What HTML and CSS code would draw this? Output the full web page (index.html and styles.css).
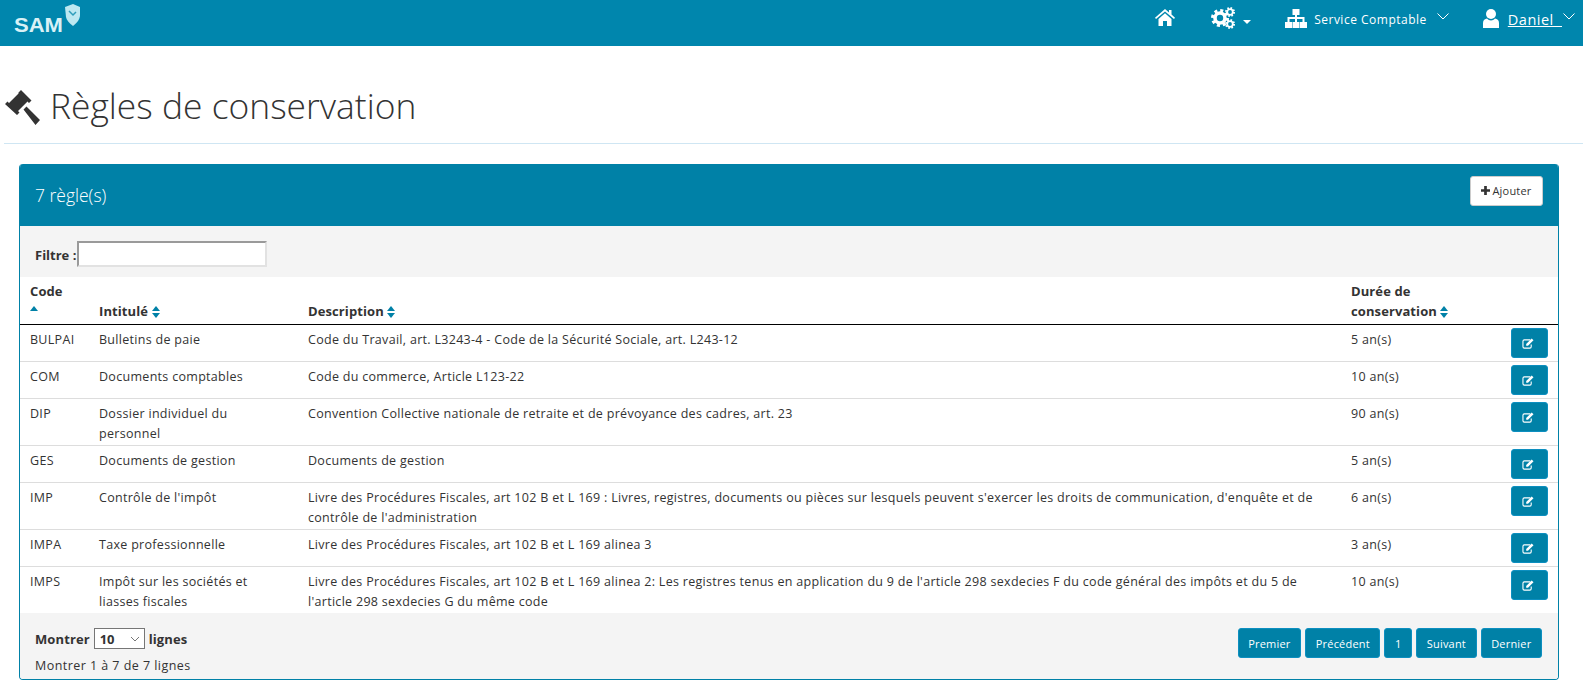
FILE: index.html
```html
<!DOCTYPE html>
<html lang="fr">
<head>
<meta charset="utf-8">
<title>Règles de conservation</title>
<link rel="stylesheet" href="styles.css">
</head>
<body>
<svg class="defs"><symbol id="edit" viewBox="0 0 13 12"><path d="M9 2H2.500A1.500 1.500 0 0 0 1 3.500V9.500A1.500 1.500 0 0 0 2.500 11H8.500A1.500 1.500 0 0 0 10 9.500V7" fill="none" stroke="#fff" stroke-width="1.200"/><path d="M4.500 6.500 10.500 .5 12.500 2.500 6.500 8.500H4.500Z" fill="#fff"/></symbol></svg>
<nav class="navbar">
  <a class="brand">
    <span class="brand-text">SAM</span>
    <svg class="brand-shield" viewBox="0 0 15 22"><path d="M0 3 8 0 15 3V11C15 15 12 19 8 22 4 19 1.500 16 1 13Z" fill="#bde8f1"/><path d="M4 7 8 11 11 8" fill="none" stroke="#2f9dbb" stroke-width="1.500"/></svg>
  </a>
  <ul class="nav-items">
    <li class="nav-home"><svg class="ico-home" viewBox="0 0 20 17"><path d="M10 0 14 3.500V1H16.500V5.600L20 8.800 19 10 10 2.400 1 10 0 8.800Z M3.500 10 10 4.300 16.500 10V17H12V12H8V17H3.500Z" fill="#fff"/></svg></li>
    <li class="nav-gears">
      <svg class="ico-gears" viewBox="0 0 24 22" fill="none" stroke="#fff">
        <circle cx="9" cy="11" r="5" stroke-width="3.600"/>
        <circle cx="9" cy="11" r="7.500" stroke-width="3" stroke-dasharray="3 2.890"/>
        <circle cx="19" cy="5" r="2.800" stroke-width="1.800"/>
        <circle cx="19" cy="5" r="4" stroke-width="2" stroke-dasharray="1.600 1.540"/>
        <circle cx="19" cy="17" r="2.800" stroke-width="1.800"/>
        <circle cx="19" cy="17" r="4" stroke-width="2" stroke-dasharray="1.600 1.540"/>
      </svg>
      <span class="caret"></span>
    </li>
    <li class="nav-service">
      <svg class="ico-sitemap" viewBox="0 0 22 19"><path fill="#fff" d="M7.500 0H14.500V6H12V8H19.500V13H22V19H15V13H17.500V10H12V13H14.500V19H7.500V13H10V10H4.500V13H7V19H0V13H2.500V8H10V6H7.500Z"/></svg>
      <span class="nav-label">Service Comptable</span>
      <svg class="chev" viewBox="0 0 12 7"><path d="M.5 .5 6 6 11.500 .5" fill="none" stroke="#fff" stroke-width="1"/></svg>
    </li>
    <li class="nav-user">
      <svg class="ico-user" viewBox="0 0 16 19"><circle cx="8" cy="5" r="5" fill="#fff"/><path d="M0 19V14C0 11 2 10 4 9.500 5 10.800 6.500 11.500 8 11.500 9.500 11.500 11 10.800 12 9.500 14 10 16 11 16 14V19Z" fill="#fff"/></svg>
      <a class="nav-name">Daniel&nbsp;</a>
      <svg class="chev chev-user" viewBox="0 0 12 7"><path d="M.5 .5 6 6 11.500 .5" fill="none" stroke="#fff" stroke-width="1"/></svg>
    </li>
  </ul>
</nav>

<header class="page-head">
  <h1><svg class="ico-gavel" viewBox="0 0 36 36"><path fill="#333" d="M16 0 26.500 10.500 24 13 22.500 11.500 13 21 14.500 22.500 12 25 0 14 2.500 11.500 4 13 13.500 3.500 13.500 2.500Z M18.500 19.500 21.500 16.500 35 30 30.500 35Z"/></svg>Règles de conservation</h1>
</header>

<section class="panel">
  <div class="panel-head">
    <span class="panel-title">7 règle(s)</span>
    <button class="btn-add"><svg class="ico-plus" viewBox="0 0 10 10"><path fill="#333" d="M3.500 0H6.500V3.500H10V6.500H6.500V10H3.500V6.500H0V3.500H3.500Z"/></svg>Ajouter</button>
  </div>
  <div class="filter-bar">
    <label class="filter-label">Filtre :</label><input class="filter-input" type="text">
  </div>
  <table class="rules">
    <thead>
      <tr>
        <th class="c-code">Code<br><span class="sort sort-asc"></span></th>
        <th class="c-title">Intitulé <span class="sort"></span></th>
        <th class="c-desc">Description <span class="sort"></span></th>
        <th class="c-dur">Durée de conservation <span class="sort"></span></th>
        <th class="c-act"></th>
      </tr>
    </thead>
    <tbody>
      <tr><td>BULPAI</td><td>Bulletins de paie</td><td>Code du Travail, art. L3243-4 - Code de la Sécurité Sociale, art. L243-12</td><td>5 an(s)</td><td class="act"><button class="btn-edit"><svg class="ico-edit"><use href="#edit"/></svg></button></td></tr>
      <tr><td>COM</td><td>Documents comptables</td><td>Code du commerce, Article L123-22</td><td>10 an(s)</td><td class="act"><button class="btn-edit"><svg class="ico-edit"><use href="#edit"/></svg></button></td></tr>
      <tr><td>DIP</td><td>Dossier individuel du personnel</td><td>Convention Collective nationale de retraite et de prévoyance des cadres, art. 23</td><td>90 an(s)</td><td class="act"><button class="btn-edit"><svg class="ico-edit"><use href="#edit"/></svg></button></td></tr>
      <tr><td>GES</td><td>Documents de gestion</td><td>Documents de gestion</td><td>5 an(s)</td><td class="act"><button class="btn-edit"><svg class="ico-edit"><use href="#edit"/></svg></button></td></tr>
      <tr><td>IMP</td><td>Contrôle de l'impôt</td><td>Livre des Procédures Fiscales, art 102 B et L 169 : Livres, registres, documents ou pièces sur lesquels peuvent s'exercer les droits de communication, d'enquête et de contrôle de l'administration</td><td>6 an(s)</td><td class="act"><button class="btn-edit"><svg class="ico-edit"><use href="#edit"/></svg></button></td></tr>
      <tr><td>IMPA</td><td>Taxe professionnelle</td><td>Livre des Procédures Fiscales, art 102 B et L 169 alinea 3</td><td>3 an(s)</td><td class="act"><button class="btn-edit"><svg class="ico-edit"><use href="#edit"/></svg></button></td></tr>
      <tr><td>IMPS</td><td>Impôt sur les sociétés et liasses fiscales</td><td>Livre des Procédures Fiscales, art 102 B et L 169 alinea 2: Les registres tenus en application du 9 de l'article 298 sexdecies F du code général des impôts et du 5 de l'article 298 sexdecies G du même code</td><td>10 an(s)</td><td class="act"><button class="btn-edit"><svg class="ico-edit"><use href="#edit"/></svg></button></td></tr>
    </tbody>
  </table>
  <div class="panel-foot">
    <div class="foot-left">
      <div class="length"><b>Montrer</b><span class="select-box"><select class="length-select"><option>10</option></select><svg class="select-chev" viewBox="0 0 10 6"><path d="M1 1 5 5 9 1" fill="none" stroke="#777" stroke-width="1"/></svg></span><b>lignes</b></div>
      <div class="info">Montrer 1 à 7 de 7 lignes</div>
    </div>
    <div class="pager">
      <button class="btn-page">Premier</button>
      <button class="btn-page">Précédent</button>
      <button class="btn-page">1</button>
      <button class="btn-page">Suivant</button>
      <button class="btn-page">Dernier</button>
    </div>
  </div>
</section>
</body>
</html>
```
FILE: styles.css
```css
* { box-sizing: border-box; }
html, body { margin: 0; padding: 0; }
body {
  font-family: "Open Sans", "Noto Sans", sans-serif;
  font-size: 12.5px;
  letter-spacing: .3px;
  line-height: 20px;
  color: #333;
  background: #fff;
  overflow: hidden;
}
.defs { display: none; }
.navbar {
  height: 46px;
  background: #0086ad;
  display: flex;
  justify-content: space-between;
  color: #fff;
}
.brand { display: flex; align-items: flex-start; padding: 4px 0 0 14px; }
.brand-text { font: 700 19.500px/19px "Liberation Sans", sans-serif; letter-spacing: 0; color: #d9f1f6; transform: scaleX(1.130); transform-origin: left; width: 50px; margin-top: 12px; }
.brand-shield { width: 15px; height: 22px; margin-left: 1px; }
.nav-items { list-style: none; display: flex; margin: 0; padding: 0 8px 0 0; align-items: flex-start; }
.nav-items li { display: flex; align-items: center; height: 40px; }
.ico-home { width: 20px; height: 17px; margin-top: -6px; }
.nav-gears { margin-left: 36px; }
.ico-gears { width: 24px; height: 22px; margin-top: -5px; }
.caret { margin: 3px 0 0 8px; border: 4px solid transparent; border-top-color: #fff; border-bottom: 0; }
.nav-service { margin-left: 34px; }
.ico-sitemap { width: 22px; height: 19px; margin: -4px 7px 0 0; }
.nav-label { font-size: 12px; letter-spacing: .5px; }
.chev { width: 12px; height: 7px; margin: -8px 0 0 10px; }
.nav-user { margin-left: 34px; }
.ico-user { width: 16px; height: 19px; margin: -4px 9px 0 0; }
.nav-name { font-size: 14.500px; letter-spacing: .5px; word-spacing: 4px; text-decoration: underline; }
.chev-user { margin-left: 1px; }

.page-head { margin: 0 0 0 4px; height: 98px; border-bottom: 1px solid #cfe6f3; }
h1 { margin: 0; padding-top: 36px; font-size: 35.400px; letter-spacing: 0; font-weight: 300; line-height: 46px; color: #333; display: flex; align-items: center; }
.ico-gavel { width: 36px; height: 36px; margin: 5px 9px 0 1px; }

.panel {
  margin: 20px 24px 0 19px;
  border: 1px solid #0081a7;
  border-top: 0;
  border-radius: 4px;
  overflow: hidden;
}
.panel-head {
  height: 62px;
  background: #0081a7;
  display: flex;
  align-items: center;
  justify-content: space-between;
  padding: 0 15px;
  color: #fff;
}
.panel-title { font-size: 17.500px; font-weight: 300; letter-spacing: 0; }
.btn-add {
  font: 11px "Open Sans", sans-serif;
  letter-spacing: .2px;
  height: 30px; width: 73px;
  margin-bottom: 9px;
  background: #fff; color: #333;
  border: 1px solid #ccc; border-radius: 3px;
  display: flex; align-items: center; justify-content: center; padding: 0;
}
.ico-plus { width: 9px; height: 9px; margin-right: 2px; }
.filter-bar { height: 51px; background: #f4f4f4; display: flex; align-items: center; padding: 5px 0 0 15px; font-weight: 700; letter-spacing: 0; font-size: 13px; }
.filter-label { margin-top: 2px; }
.filter-input { width: 190px; height: 26px; margin: 0 0 0 1px; padding: 0; border: 2px solid; border-color: #9a9a9a #e2e2e2 #e2e2e2 #9a9a9a; background: #fff; }
.rules { width: 100%; border-collapse: collapse; table-layout: fixed; }
.rules th { text-align: left; vertical-align: bottom; padding: 4px 10px 3px; border-bottom: 1px solid #000; font-weight: 700; font-size: 13px; letter-spacing: .1px; }
.rules td { vertical-align: top; padding: 5px 10px 1px; border-top: 1px solid #ddd; }
.rules tbody tr:first-child td { border-top: 0; }
.c-code { width: 69px; }
.c-title { width: 209px; }
.c-desc { width: 1043px; }
.c-dur { width: 150px; }
.rules td.act { padding: 3px 10px 3px 0; text-align: right; }
.sort { display: inline-block; width: 9px; height: 12px; vertical-align: -2px; position: relative; }
.sort::before, .sort::after { content: ""; position: absolute; left: 0; border: 4.5px solid transparent; }
.sort::before { top: 0; border-top: 0; border-bottom: 5px solid #0081a7; }
.sort::after { bottom: 0; border-bottom: 0; border-top: 5px solid #0081a7; }
.sort-asc::after { display: none; }
.btn-edit { width: 37px; height: 30px; background: #0081a7; border: 1px solid #0d8fc0; border-radius: 3px; padding: 0 3px 0 0; display: inline-flex; align-items: center; justify-content: center; }
.ico-edit { width: 12px; height: 11px; }
.panel-foot { height: 66px; background: #f4f4f4; display: flex; justify-content: space-between; padding: 15px 16px 0 15px; }
.length { display: flex; align-items: center; gap: 4px; height: 21px; font-size: 13px; letter-spacing: .1px; }
.select-box { display: inline-flex; position: relative; }
.select-chev { position: absolute; right: 5px; top: 8px; width: 10px; height: 6px; pointer-events: none; }
.length-select { appearance: none; width: 51px; height: 21px; font: 700 13px "Open Sans", sans-serif; background: #fff; border: 1px solid #767676; color: #333; padding: 0 0 0 5px; border-radius: 0; }
.info { margin-top: 7px; letter-spacing: .45px; }
.pager { display: flex; gap: 4px; }
.btn-page { height: 30px; padding: 0 9.600px; font: 11px "Open Sans", sans-serif; letter-spacing: .2px; color: #fff; background: #0081a7; border: 1px solid #0d8fc0; border-radius: 3px; }
```
